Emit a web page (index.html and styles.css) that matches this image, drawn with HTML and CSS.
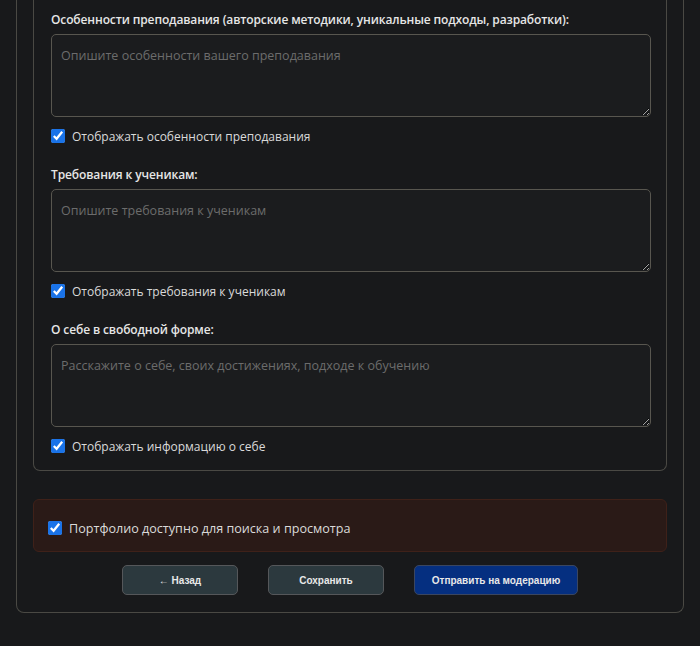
FILE: index.html
```html
<!DOCTYPE html>
<html lang="ru">
<head>
<meta charset="utf-8">
<link rel="stylesheet" href="styles.css">
</head>
<body>
<div class="outer">
  <div class="card">
    <div class="group first">
      <label class="label">Особенности преподавания (авторские методики, уникальные подходы, разработки):</label>
      <textarea class="area" placeholder="Опишите особенности вашего преподавания"></textarea>
      <label class="check"><input type="checkbox" checked><span>Отображать особенности преподавания</span></label>
    </div>
    <div class="group">
      <label class="label">Требования к ученикам:</label>
      <textarea class="area" placeholder="Опишите требования к ученикам"></textarea>
      <label class="check"><input type="checkbox" checked><span>Отображать требования к ученикам</span></label>
    </div>
    <div class="group">
      <label class="label">О себе в свободной форме:</label>
      <textarea class="area" placeholder="Расскажите о себе, своих достижениях, подходе к обучению"></textarea>
      <label class="check"><input type="checkbox" checked><span>Отображать информацию о себе</span></label>
    </div>
  </div>
  <div class="public">
    <label class="check big"><input type="checkbox" checked><span>Портфолио доступно для поиска и просмотра</span></label>
  </div>
  <div class="actions">
    <button class="btn">← Назад</button>
    <button class="btn">Сохранить</button>
    <button class="btn primary">Отправить на модерацию</button>
  </div>
</div>
</body>
</html>
```
FILE: styles.css
```css
:root { color-scheme: dark; }
html, body { margin: 0; padding: 0; }
body {
  background: #18191b;
  font-family: "Open Sans", "Noto Sans", sans-serif;
  color: #e2e2e2;
  height: 646px;
  overflow: hidden;
}
.outer {
  margin: -40px 16px 0;
  border: 1px solid #4a4944;
  border-top: none;
  border-radius: 0 0 8px 8px;
  padding: 0 16px 17px;
}
.card {
  border: 1px solid #4a4944;
  border-top: none;
  border-radius: 0 0 7px 7px;
  padding: 40px 15px 14px 17px;
}
.group { display: flex; flex-direction: column; margin-top: 19px; }
.group.first { margin-top: 10px; }
.label {
  font-size: 12px;
  font-weight: 600;
  letter-spacing: -0.12px;
  line-height: 20px;
  color: #e6e6e6;
  margin-bottom: 4px;
}
.area {
  box-sizing: border-box;
  width: 600px;
  height: 83px;
  background: #1b1c1e;
  border: 1px solid #58564f;
  border-radius: 5px;
  padding: 12px 9px;
  font-family: "Open Sans", "Noto Sans", sans-serif;
  font-size: 12.5px;
  color: #ddd;
  resize: vertical;
  margin: 0;
  outline: none;
}
.area::placeholder { color: #6c6c6c; }
.check {
  display: flex;
  align-items: center;
  gap: 7px;
  margin-top: 9px;
  height: 20px;
  font-size: 12px;
  color: #dadada;
}
.check input {
  width: 14px;
  height: 14px;
  margin: 0;
  accent-color: #1a73e8;
}
.public {
  margin-top: 28px;
  background: #2a1a17;
  border: 1px solid #3f2119;
  border-radius: 6px;
  padding: 18px 14px 13px;
}
.check.big { margin-top: 0; font-size: 12.6px; gap: 7px; }
.actions {
  display: flex;
  justify-content: center;
  gap: 30px;
  margin-top: 13px;
}
.btn {
  box-sizing: border-box;
  width: 116px;
  height: 30px;
  border: 1px solid #55575a;
  border-radius: 5px;
  background: #2c393e;
  color: #e8e8e8;
  font-family: "Liberation Sans", Arial, sans-serif;
  font-weight: bold;
  font-size: 10px;
  padding: 0;
}
.btn.primary {
  width: 164px;
  background: #052f80;
  border-color: #3a4660;
}
```
